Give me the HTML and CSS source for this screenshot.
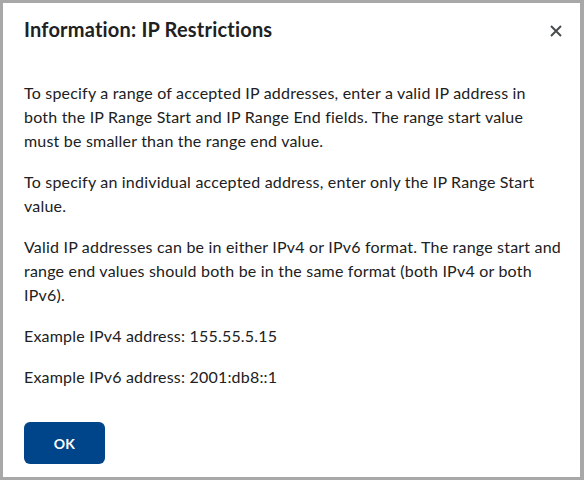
FILE: index.html
```html
<!DOCTYPE html>
<html lang="en">
<head>
    <meta charset="UTF-8">
    <meta name="viewport" content="width=device-width, initial-scale=1.0">
    <title>Information: IP Restrictions</title>
    <link rel="stylesheet" href="styles.css">
</head>
<body>

<div class="dialog">
    <div class="dialog-header">
        <h2 class="dialog-title">Information: IP Restrictions</h2>
        <button class="close-button" aria-label="Close">
            <svg width="12" height="12" viewBox="0 0 12 12">
                <path d="M1 1 L11 11 M11 1 L1 11" stroke="#494c4e" stroke-width="2"/>
            </svg>
        </button>
    </div>
    <div class="dialog-body">
        <p>To specify a range of accepted IP addresses, enter a valid IP address in both the IP Range Start and IP Range End fields. The range start value must be smaller than the range end value.</p>
        <p>To specify an individual accepted address, enter only the IP Range Start value.</p>
        <p>Valid IP addresses can be in either IPv4 or IPv6 format. The range start and range end values should both be in the same format (both IPv4 or both IPv6).</p>
        <p>Example IPv4 address: 155.55.5.15</p>
        <p>Example IPv6 address: 2001:db8::1</p>
    </div>
    <div class="dialog-footer">
        <button class="ok-button">OK</button>
    </div>
</div>

</body>
</html>
```

FILE: styles.css
```css
html, body {
    margin: 0;
    padding: 0;
}
body {
    font-family: Lato, "Noto Sans", sans-serif;
    color: #202122;
    background-color: #a8a8a8;
}
.dialog {
    box-sizing: border-box;
    width: 584px;
    height: 480px;
    border: 3px solid #a8a8a8;
    border-right-width: 4px;
    background-color: white;
    padding: 0 19px 0 21px;
}
.dialog-header {
    display: flex;
    justify-content: space-between;
    align-items: center;
    height: 52px;
}
.dialog-title {
    margin: 0;
    font-size: 20px;
    font-weight: 700;
    line-height: 28px;
    letter-spacing: 0.2px;
}
.close-button {
    background: none;
    border: none;
    padding: 0;
    margin: 4px -1px 0 0;
    width: 12px;
    height: 12px;
    cursor: pointer;
}
.close-button svg {
    display: block;
}
.dialog-body {
    padding-top: 26px;
}
.dialog-body p {
    margin: 0 0 17px 0;
    font-size: 16px;
    line-height: 24px;
    letter-spacing: 0.2px;
}
.dialog-footer {
    padding-top: 16px;
}
.ok-button {
    background-color: #004489;
    color: white;
    font-family: Lato, "Noto Sans", sans-serif;
    font-size: 14px;
    font-weight: 700;
    letter-spacing: 0.2px;
    width: 81px;
    height: 42px;
    border: none;
    border-radius: 6px;
    cursor: pointer;
}
```
